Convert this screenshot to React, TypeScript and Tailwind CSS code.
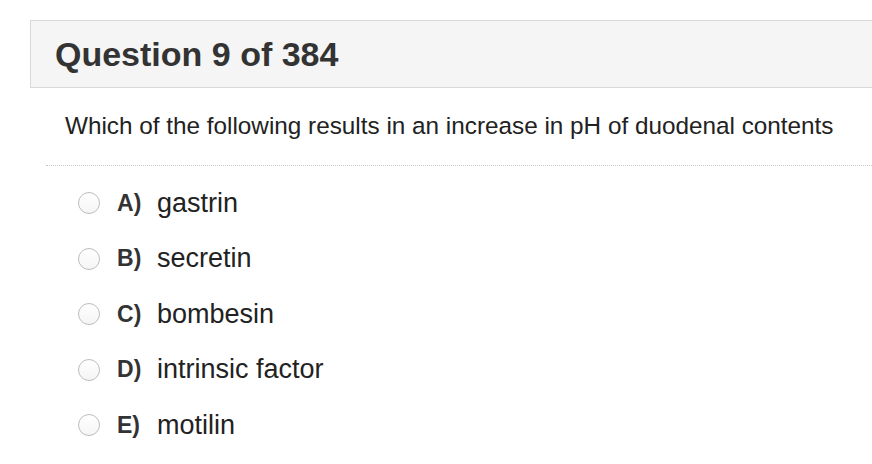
const options = [
  { key: "A", text: "gastrin" },
  { key: "B", text: "secretin" },
  { key: "C", text: "bombesin" },
  { key: "D", text: "intrinsic factor" },
  { key: "E", text: "motilin" },
];

function Radio() {
  return (
    <span className="inline-block w-[22px] h-[22px] rounded-full border border-[#bdbdbd] bg-gradient-to-b from-white to-[#f5f5f5]" />
  );
}

export default function App() {
  return (
    <div className="w-[872px] h-[464px] overflow-hidden bg-white font-['Liberation_Sans',Arial,sans-serif]">
      <div className="pt-[20px] pl-[30px]">
        <div className="h-[68px] -mr-[40px] border border-[#d9d9d9] bg-[#f5f5f5] flex items-center pl-[24px]">
          <h1 className="text-[34px] font-bold text-[#333]">Question 9 of 384</h1>
        </div>
      </div>

      <p className="pl-[65px] pt-[22px] text-[24.3px] leading-[32px] text-[#222]">
        Which of the following results in an increase in pH of duodenal contents
      </p>

      <div className="ml-[46px] mt-[23px] border-t border-dotted border-[#c8c8c8]" />

      <ul className="pl-[78px] pt-[21px] flex flex-col gap-[23.5px]">
        {options.map((o) => (
          <li key={o.key} className="flex items-center h-[32px]">
            <Radio />
            <span className="ml-[17px] w-[40px] text-[23px] font-bold text-[#333]">{o.key})</span>
            <span className="text-[27px] text-[#222]">{o.text}</span>
          </li>
        ))}
      </ul>
    </div>
  );
}
